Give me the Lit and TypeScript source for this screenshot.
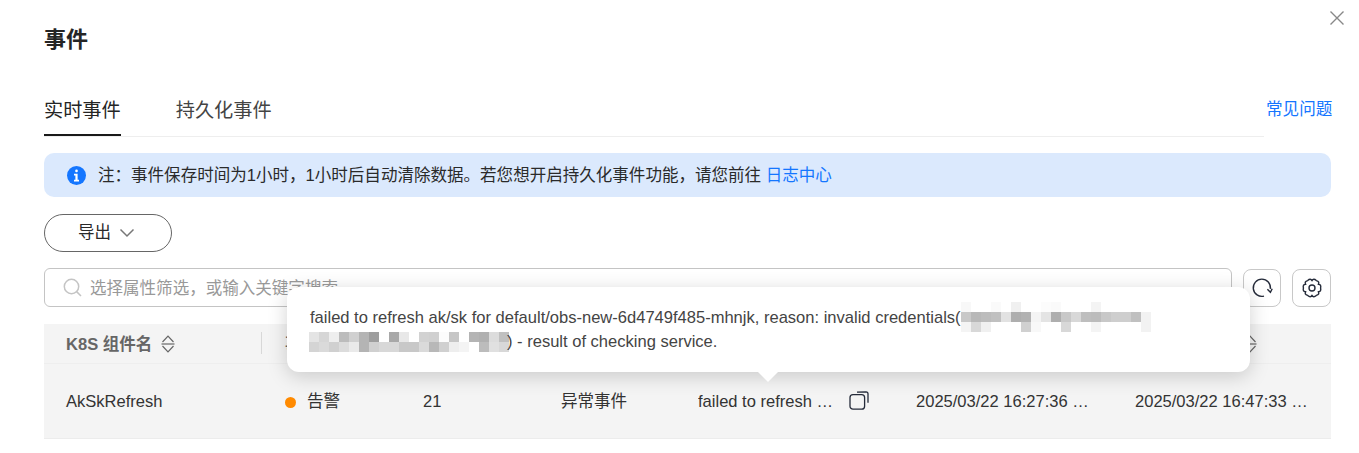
import { LitElement, html, css, svg } from "lit";
import { customElement } from "lit/decorators.js";

const M1 = [
  ["F8","FF","FF","FA","FF","F0","FF","FF","FC","FA","FF","FF","FF","F4","FF","FF","FF","FF","FF"],
  ["C8","B8","BC","C0","E2","AE","B2","F4","E4","AE","C8","D8","BE","BC","C8","CE","CE","C0","F2"],
  ["F4","D8","F0","FF","FF","FF","D0","F8","FF","FF","D8","FF","FF","F4","FF","FF","FF","FF","F2"],
];
const M2 = [
  ["E4","D6","EE","BC","D0","B4","9E","FF","A8","E8","FF","D2","D0","FC","C6","FF","B4","B0","DC","C0"],
  ["D4","DA","D0","DC","EA","B4","D0","D8","D8","C8","C8","DA","B8","D0","EE","F4","FF","BC","E0","D8"],
];

const COLS = [
  "K8S 组件名",
  "事件级别",
  "发生次数",
  "事件类型",
  "事件内容",
  "首次发生时间",
  "最近发生时间",
];

const sortIcon = svg`<svg class="sort" width="14" height="18" viewBox="0 0 14 18" fill="none" stroke="#666" stroke-width="1.2"><path d="M1.5 7 7 1.2 12.5 7"/><path d="M.5 9h13"/><path d="M1.5 11 7 16.8 12.5 11"/></svg>`;

function gearPath(cx: number, cy: number, notch: number, ctrl: number) {
  const pt = (r: number, deg: number) => {
    const a = (deg * Math.PI) / 180;
    return `${(cx + r * Math.cos(a)).toFixed(2)} ${(cy + r * Math.sin(a)).toFixed(2)}`;
  };
  let d = `M${pt(notch, -30)}`;
  for (let i = 0; i < 6; i++) {
    const lobe = i * 60;
    d += ` Q${pt(ctrl, lobe - 22)} ${pt(ctrl - 1.6, lobe)} Q${pt(ctrl, lobe + 22)} ${pt(notch, lobe + 30)}`;
  }
  return d + "Z";
}

@customElement("app-root")
export class AppRoot extends LitElement {
  static styles = css`
    :host {
      display: block;
      width: 1359px;
      height: 453px;
      overflow: hidden;
      position: relative;
      background: #fff;
      font-family: "Liberation Sans", "Noto Sans CJK SC", sans-serif;
      font-size: 16.55px;
      color: #333;
    }
    .close {
      position: absolute;
      left: 1330px;
      top: 11px;
    }
    .page {
      box-sizing: border-box;
      width: 1331px;
      padding: 26px 0 0 44px;
      display: flex;
      flex-direction: column;
    }
    h1 {
      margin: 0;
      font-size: 22px;
      line-height: 28px;
      font-weight: 700;
      color: #252525;
    }
    .tabrow {
      margin-top: 27px;
      display: flex;
      align-items: flex-start;
    }
    .tabs {
      flex: none;
      width: 1220px;
      height: 56px;
      box-sizing: border-box;
      display: flex;
      gap: 55px;
      border-bottom: 1px solid #eee;
      font-size: 19.2px;
      line-height: 26px;
      padding-top: 17px;
    }
    .tab {
      height: 38px;
      box-sizing: border-box;
      color: #444;
    }
    .tab.on {
      color: #252525;
      border-bottom: 2px solid #191919;
    }
    .faq {
      flex: none;
      margin: 17px 0 0 2px;
      font-size: 16.6px;
      line-height: 24px;
      color: #1476ff;
      white-space: nowrap;
    }
    .alert {
      margin-top: 16px;
      height: 44px;
      box-sizing: border-box;
      border-radius: 10px;
      background: #dbe9fd;
      display: flex;
      align-items: center;
      padding-left: 23px;
      gap: 12px;
      color: #2a2a2a;
    }
    .alert span {
      margin-top: -2px;
    }
    .alert a {
      color: #1476ff;
    }
    .export {
      margin-top: 17px;
      width: 128px;
      height: 38px;
      box-sizing: border-box;
      border: 1px solid #666;
      border-radius: 19px;
      display: flex;
      align-items: center;
      justify-content: center;
      gap: 8px;
      padding-right: 3px;
      color: #2a2a2a;
    }
    .export span {
      margin-top: -4px;
    }
    .tools {
      margin-top: 16px;
      display: flex;
      gap: 11px;
      align-items: flex-end;
    }
    .search {
      width: 1188px;
      height: 39px;
      box-sizing: border-box;
      border: 1px solid #c4c4c4;
      border-radius: 6px;
      display: flex;
      align-items: center;
      padding-left: 18px;
      gap: 8px;
      color: #999;
    }
    .search span {
      margin-top: -2px;
    }
    .iconbtn {
      width: 38px;
      height: 38px;
      box-sizing: border-box;
      border: 1px solid #c8c8c8;
      border-radius: 8px;
      display: flex;
      align-items: center;
      justify-content: center;
    }
    .iconbtn + .iconbtn {
      width: 39px;
    }
    .table {
      margin-top: 17px;
      background: #f4f4f4;
      display: grid;
      grid-template-columns: 219px 138px 138px 137px 218px 219px 218px;
      border-bottom: 1px solid #ececec;
    }
    .th {
      height: 40px;
      box-sizing: border-box;
      border-bottom: 1px solid #eee;
      padding-left: 22px;
      display: flex;
      align-items: center;
      gap: 9px;
      font-weight: 700;
      color: #666;
      position: relative;
      white-space: nowrap;
    }
    .th > span:first-child {
      margin-top: -2px;
    }
    .sep {
      width: 1px;
      height: 22px;
      background: #d8d8d8;
      position: absolute;
      right: 1px;
      top: 8px;
    }
    .td {
      height: 74px;
      box-sizing: border-box;
      padding: 2px 0 0 22px;
      display: flex;
      align-items: center;
      color: #333;
      white-space: nowrap;
      min-width: 0;
    }
    .td.cjk {
      padding-top: 0;
      padding-bottom: 2px;
    }
    .ell {
      overflow: hidden;
      text-overflow: ellipsis;
      white-space: nowrap;
    }
    .ell.msg {
      width: 136px;
    }
    .ell.time {
      width: 174px;
    }
    .copy {
      margin: -3px 0 0 15px;
      flex: none;
    }
    .dot {
      width: 11px;
      height: 11px;
      border-radius: 50%;
      background: #ff8a00;
      margin: 4px 11px 0 0;
    }
    .tip {
      position: absolute;
      left: 287px;
      top: 287px;
      width: 963px;
      height: 85px;
      box-sizing: border-box;
      background: #fff;
      border-radius: 12px;
      box-shadow: 0 4px 20px rgba(0, 0, 0, 0.18);
      padding: 19px 22px 0 23px;
      line-height: 24px;
      color: #444;
    }
    .tip::after {
      content: "";
      position: absolute;
      left: 471px;
      top: 85px;
      border-left: 10px solid transparent;
      border-right: 10px solid transparent;
      border-top: 10px solid #fff;
    }
    .line {
      display: flex;
      align-items: center;
      height: 24px;
      white-space: nowrap;
    }
    .mosaic {
      display: inline-grid;
      grid-auto-rows: 10px;
      grid-auto-columns: 10px;
      flex: none;
    }
    .mosaic.a {
      margin-top: -2px;
    }
    .mosaic.b {
      margin: 0 -2px 0 -1px;
    }
    .mosaic i {
      display: block;
    }
  `;

  private mosaic(rows: string[][], cls: string) {
    return html`<span class="mosaic ${cls}">
      ${rows.map((row, r) =>
        row.map(
          (c) =>
            html`<i style="grid-row:${r + 1};background:#${c}${c}${c}"></i>`
        )
      )}
    </span>`;
  }

  render() {
    return html`
      <svg class="close" width="14" height="14" viewBox="0 0 14 14" fill="none" stroke="#888" stroke-width="1.4"><path d="M.5.5l13 13M13.5.5l-13 13"/></svg>
      <div class="page">
        <h1>事件</h1>
        <div class="tabrow">
          <div class="tabs">
            <div class="tab on">实时事件</div>
            <div class="tab">持久化事件</div>
          </div>
          <div class="faq">常见问题</div>
        </div>
        <div class="alert">
          <svg width="19" height="19" viewBox="0 0 19 19"><circle cx="9.5" cy="9.5" r="9.5" fill="#1476ff"/><rect x="8.2" y="3.6" width="2.6" height="2.6" rx="1.2" fill="#fff"/><path d="M7 7.8h3.6v6h1.4v1.6H7v-1.6h1.4V9.4H7z" fill="#fff"/></svg>
          <span>注：事件保存时间为1小时，1小时后自动清除数据。若您想开启持久化事件功能，请您前往 <a>日志中心</a></span>
        </div>
        <div class="export">
          <span>导出</span>
          <svg width="16" height="10" viewBox="0 0 16 10" fill="none" stroke="#777" stroke-width="1.5"><path d="M1.5 1.5 8 8l6.5-6.5"/></svg>
        </div>
        <div class="tools">
          <div class="search">
            <svg width="19" height="19" viewBox="0 0 19 19" fill="none" stroke="#c4c4c4" stroke-width="1.5"><circle cx="8.5" cy="8.5" r="7.2"/><path d="M13.6 13.6 18 18"/></svg>
            <span>选择属性筛选，或输入关键字搜索</span>
          </div>
          <div class="iconbtn">
            <svg width="21" height="20" viewBox="0 0 21 20" fill="none" stroke="#252b3a" stroke-width="1.4"><path d="M12 18.1A8.6 8.6 0 1 1 18.4 10.8"/><path d="M15.4 11.3l3 3 1.8-3.6"/></svg>
          </div>
          <div class="iconbtn">
            <svg width="20" height="20" viewBox="0 0 20 20" fill="none" stroke="#252b3a" stroke-width="1.4" stroke-linejoin="round"><path d=${gearPath(10, 10, 7.2, 10.2)}/><circle cx="10" cy="10" r="3"/></svg>
          </div>
        </div>
        <div class="table">
          ${COLS.map(
            (c, i) => html`<div class="th">
              <span>${c}</span>${sortIcon}${i < COLS.length - 1 ? html`<span class="sep"></span>` : ""}
            </div>`
          )}
          <div class="td">AkSkRefresh</div>
          <div class="td cjk"><span class="dot"></span>告警</div>
          <div class="td">21</div>
          <div class="td cjk">异常事件</div>
          <div class="td">
            <span class="ell msg">failed to refresh ak/sk for default/obs-new</span>
            <svg class="copy" width="20" height="19" viewBox="0 0 20 19" fill="none" stroke="#252b3a" stroke-width="1.3"><rect x="1" y="3.6" width="14.6" height="14.6" rx="3"/><path d="M8 1.2 17 .8q2 0 2 2v9"/></svg>
          </div>
          <div class="td"><span class="ell time">2025/03/22 16:27:36 GMT+08:00</span></div>
          <div class="td"><span class="ell time">2025/03/22 16:47:33 GMT+08:00</span></div>
        </div>
      </div>
      <div class="tip">
        <div class="line">failed to refresh ak/sk for default/obs-new-6d4749f485-mhnjk, reason: invalid credentials(${this.mosaic(M1, "a")}</div>
        <div class="line">${this.mosaic(M2, "b")}) - result of checking service.</div>
      </div>
    `;
  }
}
